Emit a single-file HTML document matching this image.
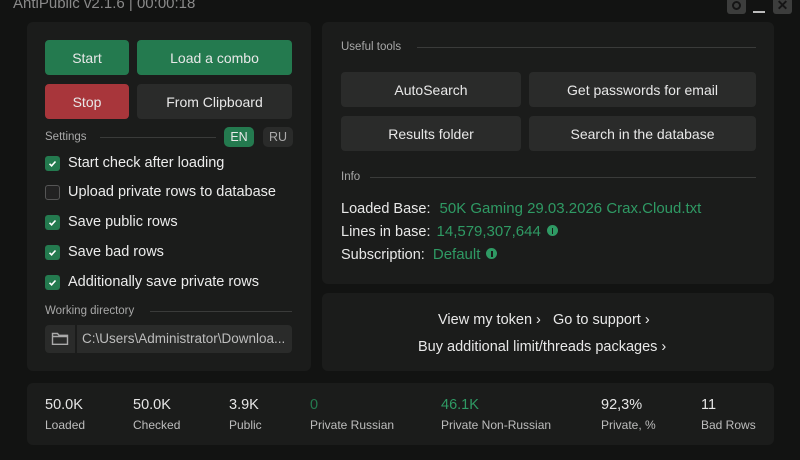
<!DOCTYPE html>
<html><head><style>
*{margin:0;padding:0;box-sizing:border-box}
body{width:800px;height:460px;background:#121312;font-family:"Liberation Sans",sans-serif;position:relative;overflow:hidden;color:#e6e6e6}
.a{position:absolute}
.p{position:absolute;background:#1b1c1b;border-radius:6px}
.b{position:absolute;border-radius:4px;display:flex;align-items:center;justify-content:center;font-size:14px;color:#e8e8e8}
.g{background:#247a4f}.r{background:#a8363b}.d{background:#2a2b2a}
.lab{position:absolute;font-size:11.5px;color:#a8a8a8}
.line{position:absolute;height:1px;background:#3a3b3a}
.cb{position:absolute;width:15px;height:15px;border-radius:3px;background:#247a4f}
.cb svg{position:absolute;left:3px;top:3px}
.cbe{position:absolute;width:15px;height:15px;border-radius:3px;border:1.5px solid #555;background:#222}
.ct{position:absolute;font-size:14.5px;color:#ececec}
.t{position:absolute;font-size:14.5px;color:#e8e8e8;white-space:nowrap}
.gr{color:#2f9a64}
.i{display:inline-block;width:11px;height:11px;border-radius:50%;background:#2f9a64;vertical-align:0px;margin-left:6px;position:relative}
.i:after{content:"";position:absolute;left:5px;top:2.5px;width:1.5px;height:6px;background:#1b1c1b}
.sv{position:absolute;font-size:14.5px;top:397px}
.sl{position:absolute;font-size:12px;color:#bdbdbd;top:418px}
</style></head><body>
<div class="a" style="left:13px;top:-5px;font-size:15px;color:#8a8a8a">AntiPublic v2.1.6 | 00:00:18</div>
<div class="a" style="left:727px;top:0;width:19px;height:14px;background:#3c3d3c;border-radius:0 0 3px 3px"><div class="a" style="left:5px;top:1px;width:9px;height:9px;border:2px solid #151515;border-radius:50%"></div></div>
<div class="a" style="left:753px;top:11px;width:12px;height:2px;background:#bbb"></div>
<div class="a" style="left:773px;top:0;width:19px;height:14px;background:#3c3d3c;border-radius:0 0 3px 3px;color:#151515;font-size:14px;font-weight:bold;text-align:center;line-height:11px">✕</div>

<div class="p" style="left:27px;top:22px;width:284px;height:349px"></div>
<div class="b g" style="left:45px;top:40px;width:84px;height:35px">Start</div>
<div class="b g" style="left:137px;top:40px;width:155px;height:35px">Load a combo</div>
<div class="b r" style="left:45px;top:84px;width:84px;height:35px">Stop</div>
<div class="b d" style="left:137px;top:84px;width:155px;height:35px">From Clipboard</div>
<div class="lab" style="left:45px;top:131px">Settings</div>
<div class="line" style="left:100px;top:137px;width:116px"></div>
<div class="b g" style="left:224px;top:127px;width:30px;height:20px;border-radius:5px;font-size:12.5px">EN</div>
<div class="b d" style="left:263px;top:127px;width:30px;height:20px;border-radius:5px;font-size:12.5px;color:#aaa">RU</div>

<div class="cb" style="left:45px;top:156px"><svg width="9" height="9" viewBox="0 0 9 9"><path d="M1.5 4.8L3.6 6.8L7.5 2.5" stroke="#fff" stroke-width="1.6" fill="none"/></svg></div>
<div class="ct" style="left:68px;top:155px">Start check after loading</div>
<div class="cbe" style="left:45px;top:185px"></div>
<div class="ct" style="left:68px;top:184px">Upload private rows to database</div>
<div class="cb" style="left:45px;top:215px"><svg width="9" height="9" viewBox="0 0 9 9"><path d="M1.5 4.8L3.6 6.8L7.5 2.5" stroke="#fff" stroke-width="1.6" fill="none"/></svg></div>
<div class="ct" style="left:68px;top:214px">Save public rows</div>
<div class="cb" style="left:45px;top:245px"><svg width="9" height="9" viewBox="0 0 9 9"><path d="M1.5 4.8L3.6 6.8L7.5 2.5" stroke="#fff" stroke-width="1.6" fill="none"/></svg></div>
<div class="ct" style="left:68px;top:244px">Save bad rows</div>
<div class="cb" style="left:45px;top:275px"><svg width="9" height="9" viewBox="0 0 9 9"><path d="M1.5 4.8L3.6 6.8L7.5 2.5" stroke="#fff" stroke-width="1.6" fill="none"/></svg></div>
<div class="ct" style="left:68px;top:274px">Additionally save private rows</div>
<div class="lab" style="left:45px;top:305px">Working directory</div>
<div class="line" style="left:150px;top:311px;width:142px"></div>
<div class="a" style="left:45px;top:325px;width:247px;height:28px;background:#2a2b2a;border-radius:4px"></div>
<div class="a" style="left:75px;top:325px;width:2px;height:28px;background:#1b1c1b"></div>
<svg class="a" style="left:51px;top:331px" width="18" height="15" viewBox="0 0 18 15"><path d="M1.5 2.5h5l1.5 1.8h8.5v9h-15z M1.5 5.5h15" stroke="#aaa" stroke-width="1.4" fill="none"/></svg>
<div class="a" style="left:82px;top:331px;font-size:13.5px;color:#bdbdbd;white-space:nowrap">C:\Users\Administrator\Downloa...</div>

<div class="p" style="left:322px;top:22px;width:452px;height:262px"></div>
<div class="lab" style="left:341px;top:41px">Useful tools</div>
<div class="line" style="left:417px;top:47px;width:339px"></div>
<div class="b d" style="left:341px;top:72px;width:180px;height:35px">AutoSearch</div>
<div class="b d" style="left:529px;top:72px;width:227px;height:35px">Get passwords for email</div>
<div class="b d" style="left:341px;top:116px;width:180px;height:35px">Results folder</div>
<div class="b d" style="left:529px;top:116px;width:227px;height:35px">Search in the database</div>
<div class="lab" style="left:341px;top:171px">Info</div>
<div class="line" style="left:370px;top:177px;width:386px"></div>
<div class="t" style="left:341px;top:200px">Loaded Base: <span class="gr" style="margin-left:5px;font-size:15px">50K Gaming 29.03.2026 Crax.Cloud.txt</span></div>
<div class="t" style="left:341px;top:223px">Lines in base: <span class="gr" style="font-size:15px;margin-left:2px">14,579,307,644</span><span class="i"></span></div>
<div class="t" style="left:341px;top:246px">Subscription: <span class="gr" style="margin-left:4px;font-size:15px">Default</span><span class="i"></span></div>

<div class="p" style="left:322px;top:293px;width:452px;height:78px"></div>
<div class="t" style="left:438px;top:312px">View my token ›&nbsp;&nbsp;&nbsp;Go to support ›</div>
<div class="t" style="left:418px;top:339px">Buy additional limit/threads packages ›</div>

<div class="p" style="left:27px;top:383px;width:747px;height:62px"></div>
<div class="sv" style="left:45px">50.0K</div><div class="sl" style="left:45px">Loaded</div>
<div class="sv" style="left:133px">50.0K</div><div class="sl" style="left:133px">Checked</div>
<div class="sv" style="left:229px">3.9K</div><div class="sl" style="left:229px">Public</div>
<div class="sv gr" style="left:310px;color:#247a4f">0</div><div class="sl" style="left:310px">Private Russian</div>
<div class="sv gr" style="left:441px">46.1K</div><div class="sl" style="left:441px">Private Non-Russian</div>
<div class="sv" style="left:601px">92,3%</div><div class="sl" style="left:601px">Private, %</div>
<div class="sv" style="left:701px">11</div><div class="sl" style="left:701px">Bad Rows</div>
</body></html>
